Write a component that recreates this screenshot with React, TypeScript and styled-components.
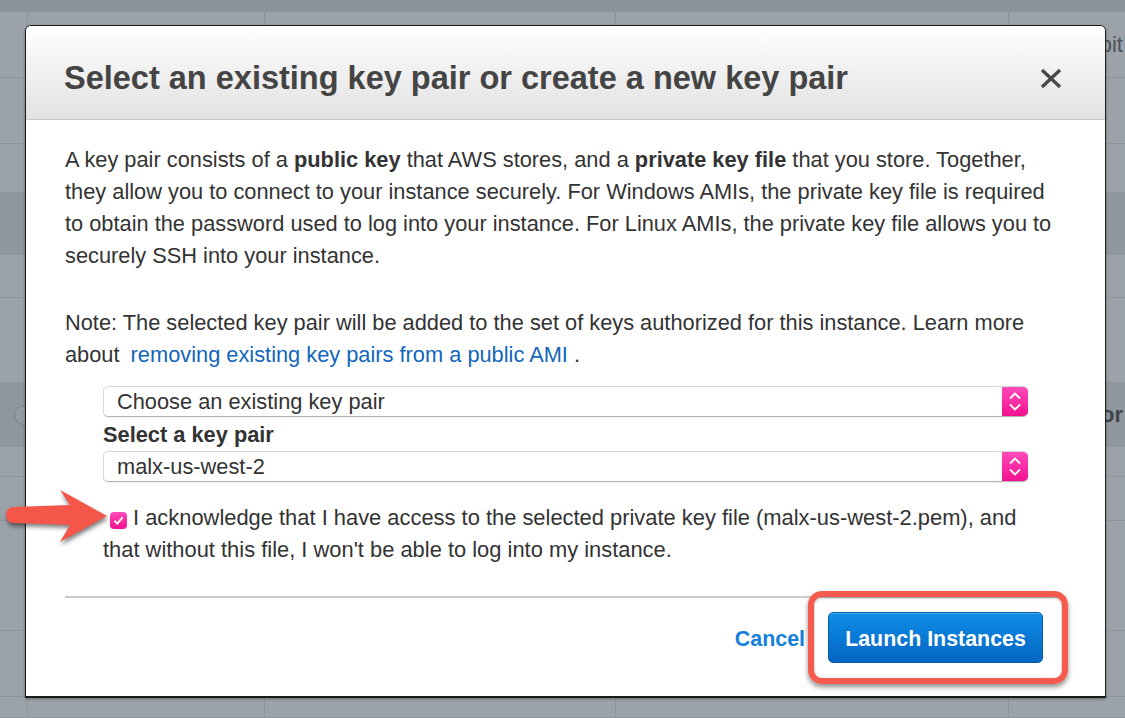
import React from "react";
import styled, { createGlobalStyle } from "styled-components";

const GlobalStyle = createGlobalStyle`
  html, body { margin: 0; padding: 0; }
  body {
    background: #9ba2a9;
    font-family: "Liberation Sans", Arial, Helvetica, sans-serif;
    overflow: hidden;
  }
  * { box-sizing: border-box; }
`;

const Page = styled.div`
  position: relative;
  width: 1125px;
  height: 718px;
  overflow: hidden;
  background: #9ba2a9;
`;

/* ---------- dimmed table behind the modal ---------- */
const Table = styled.div`
  display: flex;
  flex-direction: column;
`;

type Tone = "head" | "band" | "plain";

const Row = styled.div<{ $h: number; $tone?: Tone }>`
  height: ${(p) => p.$h}px;
  flex: none;
  display: grid;
  grid-template-columns: 27px 237px 351px 393px 1fr;
  border-bottom: 1px solid #8d949b;
  background: ${(p) =>
    p.$tone === "head" ? "#8b9199" : p.$tone === "band" ? "#8f969e" : "#9ba2a9"};
`;

const Cell = styled.div<{ $end?: boolean; $bold?: boolean }>`
  display: flex;
  align-items: center;
  justify-content: ${(p) => (p.$end ? "flex-end" : "flex-start")};
  border-left: 1px solid #8d949b;
  overflow: hidden;
  white-space: nowrap;
  font-size: 22px;
  font-weight: ${(p) => (p.$bold ? 700 : 400)};
  color: ${(p) => (p.$bold ? "#3f454b" : "#4d535a")};
  padding-right: ${(p) => (p.$end ? "2px" : "0")};
  &:first-child {
    border-left: none;
    overflow: visible;
  }
`;

const Radio = styled.span`
  width: 20px;
  height: 20px;
  margin-left: 14px;
  flex: none;
  border-radius: 50%;
  border: 1px solid #7b828a;
  background: #949ba3;
`;

const rows: { h: number; tone?: Tone; radio?: boolean; text?: string; bold?: boolean }[] = [
  { h: 12, tone: "head" },
  { h: 66, text: "64-bit" },
  { h: 66 },
  { h: 49 },
  { h: 62, tone: "band" },
  { h: 43 },
  { h: 85 },
  { h: 64, tone: "band", radio: true, text: "Monitor", bold: true },
  { h: 30 },
  { h: 44 },
  { h: 110 },
  { h: 66 },
  { h: 21 },
];

/* ---------- modal ---------- */
const Dialog = styled.div`
  position: absolute;
  left: 25px;
  top: 25px;
  width: 1081px;
  height: 673px;
  background: #ffffff;
  border: 1px solid #1c1c1c;
  border-bottom-width: 2px;
  border-radius: 6px 6px 0 0;
  box-shadow: 0 1px 3px rgba(0, 0, 0, 0.35);
  display: flex;
  flex-direction: column;
  overflow: hidden;
`;

const Header = styled.div`
  height: 94px;
  flex: none;
  padding: 36px 43px 0 38px;
  display: flex;
  align-items: flex-start;
  justify-content: space-between;
  background: linear-gradient(#ffffff 0%, #f3f3f3 40%, #e2e2e2 100%);
  border-bottom: 1px solid #c9c9c9;
`;

const Title = styled.h1`
  margin: 0;
  font-size: 32.5px;
  line-height: 32px;
  font-weight: 700;
  color: #444444;
  white-space: nowrap;
`;

const CloseButton = styled.button`
  border: 0;
  background: none;
  padding: 0;
  width: 22px;
  height: 32px;
  display: flex;
  align-items: center;
  justify-content: center;
  cursor: pointer;
`;

const Body = styled.div`
  padding: 24px 39px 0;
  color: #333333;
  font-size: 21.8px;
  line-height: 32px;
`;

const Paragraph = styled.p`
  margin: 0;
  white-space: nowrap;
  & + & {
    margin-top: 35px;
  }
`;

const Link = styled.a`
  color: #1166bb;
  text-decoration: none;
  margin-left: 5px;
`;

const Form = styled.div`
  margin: 15px 38px 0;
  display: flex;
  flex-direction: column;
`;

const SelectBox = styled.div`
  height: 31px;
  display: flex;
  align-items: stretch;
  border: 1px solid #d8d8d8;
  border-bottom-color: #b4b4b4;
  border-right-width: 0;
  border-radius: 5px;
  background: #ffffff;
  box-shadow: 0 1px 1px rgba(0, 0, 0, 0.06);
  overflow: hidden;
`;

const SelectText = styled.span`
  flex: 1;
  display: flex;
  align-items: center;
  padding-left: 13px;
  font-size: 21.8px;
  color: #333333;
`;

const Stepper = styled.span`
  width: 26px;
  flex: none;
  background: linear-gradient(#ff4cb9, #f2108f);
  display: flex;
  align-items: center;
  justify-content: center;
`;

const FieldLabel = styled.div`
  margin-top: 2px;
  font-weight: 700;
  font-size: 21.8px;
  line-height: 32px;
  color: #333333;
`;

const Acknowledge = styled.label`
  display: block;
  margin-top: 20px;
  font-size: 21.9px;
  line-height: 32px;
  color: #333333;
  white-space: nowrap;
`;

const Checkbox = styled.span`
  display: inline-flex;
  align-items: center;
  justify-content: center;
  width: 17px;
  height: 17px;
  border-radius: 4px;
  background: linear-gradient(#ff4cb9, #f2108f);
  vertical-align: -2px;
  margin: 0 6px 0 7px;
`;

const Footer = styled.div`
  margin: 30px 39px 0;
  border-top: 2px solid #cbcbcb;
  display: flex;
  justify-content: flex-end;
  align-items: center;
  gap: 23px;
  padding: 14px 23px 0 0;
`;

const CancelLink = styled.button`
  border: 0;
  background: none;
  padding: 0;
  margin-top: 3px;
  font-family: inherit;
  font-weight: 700;
  font-size: 21.4px;
  color: #1580d8;
  cursor: pointer;
`;

const PrimaryButton = styled.button`
  height: 51px;
  width: 215px;
  padding: 3px 16px 0;
  border: 1px solid #0a5cb0;
  border-radius: 5px;
  background: linear-gradient(#0c8de6, #0566c3);
  box-shadow: inset 0 1px 0 rgba(255, 255, 255, 0.25);
  color: #ffffff;
  font-family: inherit;
  font-weight: 700;
  font-size: 21.4px;
  cursor: pointer;
`;

/* ---------- annotations laid over the screenshot ---------- */
const Highlight = styled.div`
  position: absolute;
  left: 808px;
  top: 591px;
  width: 260px;
  height: 93px;
  border: 6px solid #f45b4e;
  border-radius: 14px;
  box-shadow: 0 3px 5px rgba(0, 0, 0, 0.45), inset 0 1px 3px rgba(0, 0, 0, 0.3);
  pointer-events: none;
`;

const ArrowMark = styled.svg`
  position: absolute;
  left: 0;
  top: 480px;
  width: 120px;
  height: 75px;
  filter: drop-shadow(1px 3px 2px rgba(0, 0, 0, 0.5));
  pointer-events: none;
`;

const Chevrons = () => (
  <svg width="26" height="29" viewBox="0 0 26 29" fill="none">
    <path d="M8 11.5 L13 6.5 L18 11.5" stroke="#fff" strokeWidth="1.8" />
    <path d="M8 17.5 L13 22.5 L18 17.5" stroke="#fff" strokeWidth="1.8" />
  </svg>
);

const Select = ({ value }: { value: string }) => (
  <SelectBox>
    <SelectText>{value}</SelectText>
    <Stepper>
      <Chevrons />
    </Stepper>
  </SelectBox>
);

export default function App() {
  return (
    <Page>
      <GlobalStyle />
      <Table>
        {rows.map((r, i) => (
          <Row key={i} $h={r.h} $tone={r.tone}>
            <Cell>{r.radio ? <Radio /> : null}</Cell>
            <Cell />
            <Cell />
            <Cell />
            <Cell $end $bold={r.bold}>
              {r.text}
            </Cell>
          </Row>
        ))}
      </Table>

      <Dialog>
        <Header>
          <Title>Select an existing key pair or create a new key pair</Title>
          <CloseButton aria-label="Close">
            <svg width="22" height="21" viewBox="0 0 22 21">
              <path d="M2 2 L20 19 M20 2 L2 19" stroke="#4a4a4a" strokeWidth="3.4" />
            </svg>
          </CloseButton>
        </Header>

        <Body>
          <Paragraph>
            A key pair consists of a <b>public key</b> that AWS stores, and a <b>private key file</b> that
            you store. Together,
            <br />
            they allow you to connect to your instance securely. For Windows AMIs, the private key file is
            required
            <br />
            to obtain the password used to log into your instance. For Linux AMIs, the private key file
            allows you to
            <br />
            securely SSH into your instance.
          </Paragraph>
          <Paragraph>
            Note: The selected key pair will be added to the set of keys authorized for this instance. Learn
            more
            <br />
            about <Link href="#">removing existing key pairs from a public AMI</Link> .
          </Paragraph>

          <Form>
            <Select value="Choose an existing key pair" />
            <FieldLabel>Select a key pair</FieldLabel>
            <Select value="malx-us-west-2" />
            <Acknowledge>
              <Checkbox>
                <svg width="13" height="13" viewBox="0 0 13 13" fill="none">
                  <path d="M2.5 6.8 L5.4 9.6 L10.6 3.4" stroke="#fff" strokeWidth="2" />
                </svg>
              </Checkbox>
              I acknowledge that I have access to the selected private key file (malx-us-west-2.pem), and
              <br />
              that without this file, I won't be able to log into my instance.
            </Acknowledge>
          </Form>
        </Body>

        <Footer>
          <CancelLink>Cancel</CancelLink>
          <PrimaryButton>Launch Instances</PrimaryButton>
        </Footer>
      </Dialog>

      <Highlight />
      <ArrowMark viewBox="0 480 120 75">
        <path
          d="M13 507 L70 505 L60 490 L107 516 L60 542 L70 525 L13 523 Q6 522 6 515 Q6 508 13 507 Z"
          fill="#f5564a"
        />
      </ArrowMark>
    </Page>
  );
}
